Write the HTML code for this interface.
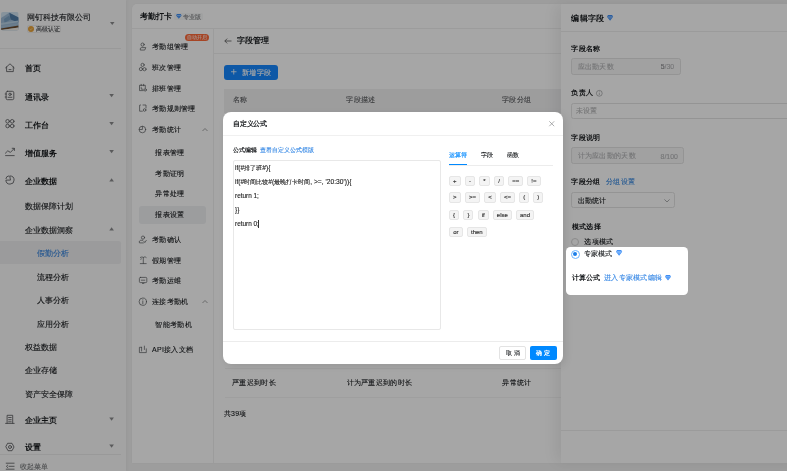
<!DOCTYPE html>
<html><head><meta charset="utf-8">
<style>
*{box-sizing:border-box;margin:0;padding:0}
html,body{width:787px;height:471px;overflow:hidden}
body{position:relative;background:#f1f1f1;font-family:"Liberation Sans",sans-serif;color:#171a1d;font-weight:500}
.a{position:absolute;white-space:nowrap}
.t{position:absolute;white-space:nowrap;line-height:10px;height:10px}
.b{font-weight:bold}
.t:not(.b){-webkit-text-stroke-width:0.12px}
.op{-webkit-text-stroke-width:0.15px}
.cj{font-size:6.2px}
svg{position:absolute;overflow:visible}
#side{position:absolute;left:0;top:0;width:125.5px;height:471px;background:#fafafa;box-shadow:1px 0 3px rgba(0,0,0,.04)}
.sm{font-size:7.9px}
.card{position:absolute;left:132px;top:4px;width:600px;height:458.5px;background:#fff;border-radius:5px 5px 0 0;box-shadow:0 0 2px rgba(0,0,0,.04)}
.sub{font-size:7px;letter-spacing:0.3px;color:#171a1d}
.ov{position:absolute;left:0;top:0;width:787px;height:471px;background:rgba(0,0,0,.35)}
#drawer{position:absolute;left:561px;top:4px;width:240px;height:459px;background:#fff;border-radius:1px 0 0 0;box-shadow:-6px 0 16px rgba(0,0,0,.08)}
#modal{position:absolute;left:223px;top:112px;width:340px;height:252px;background:#fff;border-radius:8px;box-shadow:2px 2px 8px rgba(0,0,0,.10)}
.op{position:absolute;height:10.4px;line-height:9.4px;border:0.5px solid #e6e6e6;background:#f4f4f4;border-radius:2px;font-size:6px;color:#333;text-align:center}
</style></head>
<body>
<div id="root" style="position:absolute;left:0;top:0;width:787px;height:471px;will-change:transform">
<!-- ============ SIDEBAR ============ -->
<div id="side">
  <svg style="left:1.2px;top:12px" width="17.6" height="18.5" viewBox="0 0 17.6 18.5"><defs><clipPath id="av"><rect width="17.6" height="18.5" rx="2"/></clipPath></defs><g clip-path="url(#av)">
  <rect width="17.6" height="18.5" fill="#cfe2f0"/>
  <path d="M0 18.5V6L8.3 0.8L17.6 5.5V18.5Z" fill="#9dbbd6"/>
  <path d="M8.3 0.8L17.6 5.5V10.5L9.5 7.5Z" fill="#4f7ba6"/>
  <path d="M3 7L8.3 3.5L9.5 7.5L3.5 11Z" fill="#7da3c4"/>
  <path d="M0 11L17.6 8.5V10L0 13Z" fill="#b9d2e4"/>
  <path d="M0 14L17.6 11.5V13L0 15.5Z" fill="#a6c2d8"/>
  <path d="M0 16.6L17.6 13.6V15.4L0 18Z" fill="#6b4a2c"/>
  <path d="M0 18L17.6 15.4V18.5H0Z" fill="#f0ebe3"/>
</g></svg>
  <div class="t" style="left:27px;top:13px;font-size:8px">网钉科技有限公司</div>
  <div class="a" style="left:27px;top:24.7px;width:33.5px;height:8.7px;background:#fff;border:0.5px solid #ececec;border-radius:2px"></div>
  <div class="a" style="left:28px;top:26px;width:6px;height:6px;border-radius:50%;background:#e8a33a"></div>
  <svg style="left:28px;top:26px" width="6" height="6"><path d="M1.8 3.1L2.7 3.9L4.3 2.2" fill="none" stroke="#fbe3b5" stroke-width="0.6"/></svg>
  <div class="t" style="left:36px;top:24px;font-size:5.8px;color:#3d3f42">高级认证</div>
  <svg style="left:110px;top:21.5px" width="5" height="3"><path d="M0 0H4.5L2.25 3Z" fill="#8a8b8d"/></svg>
  <div class="a" style="left:0;top:48px;width:121px;height:1px;background:#ececec"></div>

  <div class="t b sm" style="left:25px;top:64.1px">首页</div>
  <div class="t b sm" style="left:25px;top:92.6px">通讯录</div>
  <div class="t b sm" style="left:25px;top:120.6px">工作台</div>
  <div class="t b sm" style="left:25px;top:148.6px">增值服务</div>
  <div class="t b sm" style="left:25px;top:176.6px">企业数据</div>
  <div class="t sm" style="left:25px;top:202px">数据保障计划</div>
  <div class="t sm" style="left:25px;top:226px">企业数据洞察</div>
  <div class="a" style="left:0;top:241px;width:120.7px;height:22.8px;background:#eeeff0;border-radius:0 2.5px 2.5px 0"></div>
  <div class="t sm" style="left:36.5px;top:249px;color:#3a85dc">假勤分析</div>
  <div class="t sm" style="left:36.5px;top:272.5px">流程分析</div>
  <div class="t sm" style="left:36.5px;top:296px">人事分析</div>
  <div class="t sm" style="left:36.5px;top:319.5px">应用分析</div>
  <div class="t sm" style="left:25px;top:343px">权益数据</div>
  <div class="t sm" style="left:25px;top:366px">企业存储</div>
  <div class="t sm" style="left:25px;top:389.5px">资产安全保障</div>
  <div class="t b sm" style="left:25px;top:415.6px">企业主页</div>
  <div class="t b sm" style="left:25px;top:442.6px">设置</div>
  <div class="a" style="left:0;top:454px;width:121px;height:1px;background:#ececec"></div>
  <div class="t" style="left:19.5px;top:461.5px;font-size:6.9px;color:#7a7c7e">收起菜单</div>

  <svg style="left:0;top:0" width="123" height="471" fill="none" stroke="#505255" stroke-width="0.8" stroke-linejoin="round" stroke-linecap="round">
    <!-- home -->
    <path d="M5.6 67.8L10 63.8L14.2 67.8M6.6 66.9V71.6H13.3V66.9M9 69.6H11"/>
    <!-- contacts -->
    <rect x="6.1" y="91.3" width="7.7" height="8.4" rx="1.4"/>
    <circle cx="10" cy="94.3" r="1.2"/>
    <path d="M8.1 97.3H11.9M5.2 94H6.3M5.2 97H6.3"/>
    <!-- workbench -->
    <circle cx="7.6" cy="121.3" r="1.8"/><circle cx="12.2" cy="121.3" r="1.8"/>
    <circle cx="7.6" cy="126" r="1.8"/><circle cx="12.2" cy="126" r="1.8"/>
    <!-- trend -->
    <path d="M5.4 153.2L7.8 150.8L10.4 152.4L14.2 148.5M12.2 148.3H14.4V150.5M5.6 155.6H14.2"/>
    <!-- pie -->
    <path d="M10.1 175.9A4.1 4.1 0 1 1 5.9 180.1H10.1Z"/>
    <path d="M8.6 175.9A3 3 0 0 0 5.9 178.6"/>
    <!-- building -->
    <path d="M7.1 423.2V415.3H12.7V423.2M5.6 423.4H14.2M8.6 417.5H11.2M8.6 419.7H11.2M8.6 421.8H11.2"/>
    <!-- settings hex -->
    <path d="M8 443.3H12L14 447L12 450.7H8L6 447Z"/>
    <circle cx="10" cy="447" r="1.5"/>
    <!-- collapse -->
    <path d="M6.2 463.2H14.1M9 466.3H14.1M6.2 469.2H14.1M7.8 465L6.4 466.3L7.8 467.6" stroke="#4a4c4f" stroke-width="0.75"/>
  </svg>
  <svg style="left:0;top:0" width="123" height="471" fill="#8a8b8d">
    <path d="M109.3 94H113.9L111.6 97.2Z"/>
    <path d="M109.3 122H113.9L111.6 125.2Z"/>
    <path d="M109.3 150H113.9L111.6 153.2Z"/>
    <path d="M109.3 181.4H113.9L111.6 178.2Z"/>
    <path d="M109.3 230.4H113.9L111.6 227.2Z"/>
    <path d="M109.3 417.5H113.9L111.6 420.7Z"/>
    <path d="M109.3 444.5H113.9L111.6 447.7Z"/>
  </svg>
</div>

<!-- ============ MAIN CARD ============ -->
<div class="card"></div>
<div class="a" style="left:132px;top:28px;width:600px;height:1px;background:#f0f0f0"></div>
<div class="a" style="left:213px;top:29px;width:1px;height:434px;background:#f0f0f0"></div>
<div class="t b" style="left:140px;top:11.9px;font-size:8px">考勤打卡</div>
<div class="a" style="left:174px;top:12.8px;width:28.5px;height:7.5px;background:#f6f7f8;border-radius:1.5px"></div>
<svg style="left:176px;top:14.2px" width="5.6" height="4.8" viewBox="0 0 6 5.7" preserveAspectRatio="none"><path d="M1 0H5L6 1.8L3 5.7L0 1.8Z" fill="#3f8ef5"/><path d="M0.5 1.5H5.5L5.3 2.4H0.7Z" fill="#a9d2ff"/><path d="M2 3.2H4L3 4.4Z" fill="#7fbaff"/></svg>
<div class="t" style="left:183.3px;top:11.6px;font-size:5.8px;color:#8a8b8d">专业版</div>
<div class="a" style="left:185.3px;top:33.8px;width:23.6px;height:7.3px;background:#ff6a3a;border-radius:4px;font-size:4.6px;line-height:7.3px;color:#fff;text-align:center">自动开启</div>
<div class="t sub" style="left:152px;top:41.8px">考勤组管理</div>
<div class="t sub" style="left:152px;top:62.8px">班次管理</div>
<div class="t sub" style="left:152px;top:83.8px">排班管理</div>
<div class="t sub" style="left:152px;top:104.3px">考勤规则管理</div>
<div class="t sub" style="left:152px;top:125.3px">考勤统计</div>
<svg style="left:202px;top:128px" width="6" height="3"><path d="M0.5 3L3 0.5L5.5 3" fill="none" stroke="#8a8b8d" stroke-width="0.8"/></svg>
<div class="t sub" style="left:155.4px;top:147.8px">报表管理</div>
<div class="t sub" style="left:155.4px;top:168.8px">考勤证明</div>
<div class="t sub" style="left:155.4px;top:189.3px">异常处理</div>
<div class="a" style="left:139px;top:205.5px;width:67px;height:18.5px;background:#f0f1f3;border-radius:3px"></div>
<div class="t sub" style="left:155.4px;top:210.3px">报表设置</div>
<div class="t sub" style="left:152px;top:234.8px">考勤确认</div>
<div class="t sub" style="left:152px;top:255.8px">假期管理</div>
<div class="t sub" style="left:152px;top:276.3px">考勤运维</div>
<div class="t sub" style="left:152px;top:297.3px">连接考勤机</div>
<svg style="left:202px;top:299.5px" width="6" height="3"><path d="M0.5 3L3 0.5L5.5 3" fill="none" stroke="#8a8b8d" stroke-width="0.8"/></svg>
<div class="t sub" style="left:155.4px;top:320.3px">智能考勤机</div>
<div class="t sub" style="left:152px;top:345.3px">API接入文档</div>
<svg style="left:0;top:0" width="215" height="471" fill="none" stroke="#55575a" stroke-width="0.7" stroke-linejoin="round" stroke-linecap="round">
  <circle cx="142.6" cy="44.6" r="1.6"/>
  <path d="M140.3 49.7V48.9A1.3 1.3 0 0 1 141.6 47.6H145.8L144.9 49.7Z"/>
  <circle cx="142.6" cy="64.9" r="1.6"/><circle cx="140.9" cy="69.1" r="1.6"/><circle cx="144.5" cy="69.2" r="1.6"/>
  <path d="M145.3 88.2V85.3H139.5V90.6H143.3M141.2 84.3V85.8M143.6 84.3V85.8M141.2 87.5L141.3 89.2H143"/>
  <circle cx="145.2" cy="89.9" r="1.2"/>
  <path d="M143 105H146V108M142.4 111.2H139.6V105.2L140.6 105"/>
  <circle cx="144.6" cy="110" r="1.3"/>
  <circle cx="142.4" cy="129.5" r="3.3"/>
  <path d="M142.4 126.4V129.5H139.3"/>
  <circle cx="143" cy="237.6" r="1.6"/>
  <path d="M143.4 242.9H139.5A1.7 1.7 0 0 1 141.2 240.3H142.6M143.8 241.2L144.8 242.6L146.3 240.4"/>
  <path d="M140.4 257.4C141.5 256.8 143 256.8 143.3 257.6C143.8 256.7 145.5 256.7 146.2 257.4M143.3 257.6V263.5M140.3 263.6H146.2M141.2 258.7L140.9 259.4"/>
  <rect x="139.4" y="277.4" width="7.4" height="5.2" rx="1"/>
  <path d="M141.3 280.2H144.8M142.4 283.4H143.9"/>
  <circle cx="142.8" cy="301.7" r="3.7"/>
  <path d="M142.8 299.8V300.1M142.8 301.4V303.8"/>
  <path d="M141.6 347.3H139.4V352.6H146.3V348.8M144.4 346.1V349.5M141.6 347.3V351"/>
</svg>

<svg style="left:224px;top:38px" width="8" height="6"><path d="M7.5 3H0.8M3.2 0.6L0.8 3L3.2 5.4" fill="none" stroke="#555" stroke-width="0.8"/></svg>
<div class="t b" style="left:236.8px;top:36px;font-size:8px">字段管理</div>
<div class="a" style="left:214px;top:53px;width:520px;height:1px;background:#f0f0f0"></div>
<div class="a" style="left:224px;top:64.5px;width:54px;height:15.8px;background:#1688ff;border-radius:3px"></div>
<svg style="left:231.3px;top:69.3px" width="6" height="6"><path d="M2.75 0V5.5M0 2.75H5.5" stroke="#fff" stroke-width="0.8"/></svg>
<div class="t sub" style="left:241.7px;top:67.8px;color:#fff;letter-spacing:0.5px">新增字段</div>
<div class="a" style="left:224px;top:89px;width:340px;height:24px;background:#f1f1f2"></div>
<div class="t sub" style="left:232.6px;top:95.1px;color:#5c5e60">名称</div>
<div class="t sub" style="left:346.4px;top:95.1px;color:#5c5e60">字段描述</div>
<div class="t sub" style="left:502px;top:95.1px;color:#5c5e60">字段分组</div>
<div class="a" style="left:225px;top:368px;width:340px;height:1px;background:#f4f4f4"></div>
<div class="t sub" style="left:232.2px;top:377.5px">严重迟到时长</div>
<div class="t sub" style="left:346.6px;top:377.5px">计为严重迟到的时长</div>
<div class="t sub" style="left:502.3px;top:377.5px">异常统计</div>
<div class="a" style="left:225px;top:396.5px;width:340px;height:1px;background:#f4f4f4"></div>
<div class="t sub" style="left:223.7px;top:408.5px">共39项</div>


<!-- ============ DRAWER ============ -->
<div id="drawer"></div>
<div class="t b" style="left:571.3px;top:14px;font-size:8px;letter-spacing:0.25px">编辑字段</div>
<svg style="left:606.9px;top:15.1px" width="6.1" height="5.7" viewBox="0 0 6 5.7" preserveAspectRatio="none"><path d="M1 0H5L6 1.8L3 5.7L0 1.8Z" fill="#3f8ef5"/><path d="M0.5 1.5H5.5L5.3 2.4H0.7Z" fill="#a9d2ff"/><path d="M2 3.2H4L3 4.4Z" fill="#7fbaff"/></svg>
<div class="a" style="left:561px;top:31px;width:226px;height:1px;background:#efefef"></div>
<div class="t b" style="left:571.3px;top:44px;font-size:7px;letter-spacing:0.3px">字段名称</div>
<div class="a" style="left:571.3px;top:58px;width:109.5px;height:16.7px;border:0.6px solid #e3e3e3;border-radius:2.5px;background:#f7f7f8"></div>
<div class="t" style="left:577.6px;top:61.7px;font-size:7px;letter-spacing:0.3px;color:#b4b5b6">应出勤天数</div>
<div class="t" style="left:660.7px;top:62.3px;font-size:6.9px;color:#b4b5b6"><span style="color:#8a8b8d">5</span>/30</div>
<div class="t b" style="left:571.3px;top:88.2px;font-size:7px;letter-spacing:0.3px">负责人</div>
<svg style="left:595.5px;top:89.5px" width="7" height="7"><circle cx="3.3" cy="3.3" r="2.9" fill="none" stroke="#8a8b8d" stroke-width="0.6"/><path d="M3.3 2.6V5" stroke="#8a8b8d" stroke-width="0.6"/><circle cx="3.3" cy="1.7" r="0.35" fill="#8a8b8d"/></svg>
<div class="a" style="left:571.3px;top:103px;width:230px;height:16px;border:0.6px solid #e3e3e3;border-radius:2.5px;background:#fff"></div>
<div class="t" style="left:575.5px;top:106.2px;font-size:7px;letter-spacing:0.3px;color:#b4b5b6">未设置</div>
<div class="t b" style="left:571.3px;top:133.2px;font-size:7px;letter-spacing:0.3px">字段说明</div>
<div class="a" style="left:571.2px;top:147.3px;width:112.4px;height:16.5px;border:0.6px solid #e3e3e3;border-radius:2.5px;background:#f7f7f8"></div>
<div class="t" style="left:577.6px;top:150.9px;font-size:7px;letter-spacing:0.3px;color:#b4b5b6">计为应出勤的天数</div>
<div class="t" style="left:660.6px;top:151.5px;font-size:6.9px;color:#b4b5b6">8/100</div>
<div class="t b" style="left:571.3px;top:177.2px;font-size:7px;letter-spacing:0.3px">字段分组</div>
<div class="t" style="left:605.9px;top:177.2px;font-size:7px;letter-spacing:0.35px;color:#3d8be0">分组设置</div>
<div class="a" style="left:571.2px;top:192.4px;width:103.6px;height:16.1px;border:0.6px solid #e3e3e3;border-radius:2.5px;background:#fff"></div>
<div class="t" style="left:577.6px;top:195.8px;font-size:7px;letter-spacing:0.3px;">出勤统计</div>
<svg style="left:663.5px;top:199px" width="6" height="3.5"><path d="M0.4 0.4L3 3L5.6 0.4" fill="none" stroke="#8a8b8d" stroke-width="0.7"/></svg>
<div class="t b" style="left:571.7px;top:222px;font-size:7px;letter-spacing:0.3px">模式选择</div>
<div class="a" style="left:571.2px;top:238.2px;width:8.3px;height:8.3px;border:0.6px solid #d6d6d6;border-radius:50%;background:#fff"></div>
<div class="t" style="left:584.4px;top:237.2px;font-size:7px;letter-spacing:0.3px;">选项模式</div>
<div class="a" style="left:561px;top:429.7px;width:226px;height:1px;background:#efefef"></div>

<!-- ============ OVERLAY ============ -->
<div class="ov"></div>

<!-- ============ MODAL ============ -->
<div id="modal"></div>
<div class="t b" style="left:233.4px;top:118.6px;font-size:7px;letter-spacing:-0.3px">自定义公式</div>
<svg style="left:549px;top:121px" width="5.5" height="5.5"><path d="M0.3 0.3L5.2 5.2M5.2 0.3L0.3 5.2" stroke="#8a8b8d" stroke-width="0.7"/></svg>
<div class="a" style="left:223px;top:134.8px;width:340px;height:0.8px;background:#f0f0f0"></div>
<div class="t b" style="left:233.2px;top:145px;font-size:5.9px">公式编辑</div>
<div class="t" style="left:260.4px;top:145px;font-size:5.85px;color:#3c8ce6">查看自定义公式模版</div>
<div class="a" style="left:233.4px;top:160.3px;width:207.3px;height:170px;border:0.6px solid #e8e8e8;border-radius:2px"></div>
<div class="t" style="left:235px;top:163px;font-size:6.7px;color:#222">if(#<span class="cj">排了班</span>#){</div>
<div class="t" style="left:235px;top:177px;font-size:6.7px;color:#222">if(#<span class="cj">时间比较</span>#(<span class="cj">最晚打卡时间</span>, &gt;=, '20:30')){</div>
<div class="t" style="left:235px;top:191px;font-size:6.4px;color:#222">return 1;</div>
<div class="t" style="left:235px;top:205px;font-size:6.5px;color:#222">}}</div>
<div class="t" style="left:235px;top:219px;font-size:6.4px;color:#222">return 0;</div>
<div class="a" style="left:258.2px;top:220.3px;width:0.55px;height:7.6px;background:#333"></div>
<div class="t" style="left:449.4px;top:150px;font-size:6px;color:#0089ff">运算符</div>
<div class="t" style="left:481px;top:150px;font-size:6px;color:#171a1d">字段</div>
<div class="t" style="left:506.8px;top:150px;font-size:6px;color:#171a1d">函数</div>
<div class="a" style="left:449px;top:165px;width:104px;height:0.6px;background:#ececec"></div>
<div class="a" style="left:449.4px;top:164px;width:18px;height:1.3px;background:#0089ff"></div>
<div class="op" style="left:449.0px;top:175.6px;width:11.7px">+</div>
<div class="op" style="left:464.7px;top:175.6px;width:10.7px">-</div>
<div class="op" style="left:479.3px;top:175.6px;width:10.4px">*</div>
<div class="op" style="left:494.1px;top:175.6px;width:9.9px">/</div>
<div class="op" style="left:508.2px;top:175.6px;width:14.9px">==</div>
<div class="op" style="left:527.3px;top:175.6px;width:13.3px">!=</div>
<div class="op" style="left:449.0px;top:192.3px;width:11.7px">&gt;</div>
<div class="op" style="left:465.0px;top:192.3px;width:14.8px">&gt;=</div>
<div class="op" style="left:484.3px;top:192.3px;width:11.4px">&lt;</div>
<div class="op" style="left:500.0px;top:192.3px;width:14.8px">&lt;=</div>
<div class="op" style="left:519.1px;top:192.3px;width:10.1px">(</div>
<div class="op" style="left:533.2px;top:192.3px;width:10.0px">)</div>
<div class="op" style="left:449.0px;top:209.5px;width:10.1px">{</div>
<div class="op" style="left:463.4px;top:209.5px;width:10.0px">}</div>
<div class="op" style="left:477.7px;top:209.5px;width:10.9px">if</div>
<div class="op" style="left:493.0px;top:209.5px;width:18.7px">else</div>
<div class="op" style="left:516.1px;top:209.5px;width:17.9px">and</div>
<div class="op" style="left:449.0px;top:226.5px;width:13.8px">or</div>
<div class="op" style="left:467.0px;top:226.5px;width:19.7px">then</div>
<div class="a" style="left:223px;top:341px;width:340px;height:0.6px;background:#ececec"></div>
<div class="a" style="left:499.4px;top:346.3px;width:26.3px;height:13.3px;border:0.6px solid #e3e3e3;border-radius:2px;background:#fff"></div>
<div class="t" style="left:505.5px;top:348px;font-size:6.3px;letter-spacing:2px;color:#171a1d">取消</div>
<div class="a" style="left:529.6px;top:346.3px;width:27.1px;height:13.3px;background:#0089ff;border-radius:2px"></div>
<div class="t b" style="left:536px;top:348px;font-size:6.3px;letter-spacing:2px;color:#fff">确定</div>

<!-- ============ HIGHLIGHT ============ -->
<div class="a" style="left:566px;top:247.1px;width:122.2px;height:47.7px;background:#fff;border-radius:4.5px"></div>
<div class="a" style="left:570.8px;top:249.7px;width:9px;height:9px;border:0.7px solid #6ab4ff;border-radius:50%;background:#fff"></div>
<div class="a" style="left:573.2px;top:252.1px;width:4.2px;height:4.2px;border-radius:50%;background:#1a7ee8"></div>
<div class="t" style="left:584.4px;top:249.2px;font-size:7px">专家模式</div>
<svg style="left:615.7px;top:250.0px" width="6.2" height="5.8" viewBox="0 0 6 5.7" preserveAspectRatio="none"><path d="M1 0H5L6 1.8L3 5.7L0 1.8Z" fill="#3f8ef5"/><path d="M0.5 1.5H5.5L5.3 2.4H0.7Z" fill="#a9d2ff"/><path d="M2 3.2H4L3 4.4Z" fill="#7fbaff"/></svg>
<div class="t b" style="left:571.7px;top:273.2px;font-size:7px">计算公式</div>
<div class="t" style="left:604px;top:273.2px;font-size:7px;letter-spacing:0.25px;color:#3a8ae6">进入专家模式编辑</div>
<svg style="left:665px;top:275.1px" width="6.0" height="5.6" viewBox="0 0 6 5.7" preserveAspectRatio="none"><path d="M1 0H5L6 1.8L3 5.7L0 1.8Z" fill="#3f8ef5"/><path d="M0.5 1.5H5.5L5.3 2.4H0.7Z" fill="#a9d2ff"/><path d="M2 3.2H4L3 4.4Z" fill="#7fbaff"/></svg>

</div>
</body></html>
